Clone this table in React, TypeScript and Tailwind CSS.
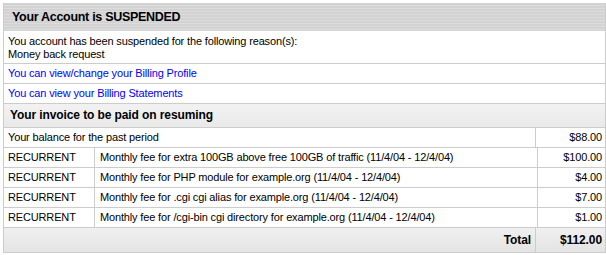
import React from "react"

const fees = [
  { kind: "RECURRENT", text: "Monthly fee for extra 100GB above free 100GB of traffic (11/4/04 - 12/4/04)", amount: "$100.00" },
  { kind: "RECURRENT", text: "Monthly fee for PHP module for example.org (11/4/04 - 12/4/04)", amount: "$4.00" },
  { kind: "RECURRENT", text: "Monthly fee for .cgi cgi alias for example.org (11/4/04 - 12/4/04)", amount: "$7.00" },
  { kind: "RECURRENT", text: "Monthly fee for /cgi-bin cgi directory for example.org (11/4/04 - 12/4/04)", amount: "$1.00" },
]

const stripes =
  "bg-[repeating-linear-gradient(180deg,#d3d3d3_0px,#d3d3d3_2px,#dcdcdc_2px,#dcdcdc_3px)]"

export default function App() {
  return (
    <div className="min-h-screen bg-white pt-[3px] pl-[3px] font-['Liberation_Sans',Arial,sans-serif] text-[11px] leading-[13px] tracking-[-0.15px] text-black">
      <div className="w-[603px] border-x border-b border-[#cccccc]">
        <div className={`flex h-[28px] items-center pl-[8px] text-[12.5px] font-bold tracking-[-0.3px] ${stripes}`}>
          Your Account is SUSPENDED
        </div>
        <div className="h-[33px] border-b border-[#cccccc] px-[4px] pt-[4px]">
          <div>You account has been suspended for the following reason(s):</div>
          <div>Money back request</div>
        </div>
        <div className="flex h-[20px] items-center border-b border-[#cccccc] px-[4px] text-[#0000ff]">
          You can view/change your Billing Profile
        </div>
        <div className="flex h-[20px] items-center border-b border-[#cccccc] px-[4px] text-[#0000ff]">
          You can view your Billing Statements
        </div>
        <div className="flex h-[24px] items-center border-b border-[#cccccc] bg-[linear-gradient(180deg,#f2f2f2,#e9e9e9)] pl-[6px] text-[12px] font-bold tracking-[-0.1px]">
          Your invoice to be paid on resuming
        </div>
        <div className="flex h-[20px] border-b border-[#cccccc]">
          <div className="flex flex-1 items-center px-[4px]">Your balance for the past period</div>
          <div className="flex w-[70px] items-center justify-end border-l border-[#cccccc] pr-[3px]">$88.00</div>
        </div>
        {fees.map((f, i) => (
          <div key={i} className="flex h-[20px] border-b border-[#cccccc]">
            <div className="flex w-[90px] items-center px-[4px]">{f.kind}</div>
            <div className="flex flex-1 items-center border-l border-[#cccccc] px-[5px]">{f.text}</div>
            <div className="flex w-[68px] items-center justify-end border-l border-[#cccccc] pr-[3px]">{f.amount}</div>
          </div>
        ))}
        <div className="flex h-[24px] bg-[linear-gradient(180deg,#f0f0f0,#e4e4e4)] text-[12px] font-bold tracking-[-0.1px]">
          <div className="flex flex-1 items-center justify-end pr-[4px]">Total</div>
          <div className="flex w-[70px] items-center justify-end border-l border-[#cccccc] pr-[3px]">$112.00</div>
        </div>
      </div>
    </div>
  )
}
